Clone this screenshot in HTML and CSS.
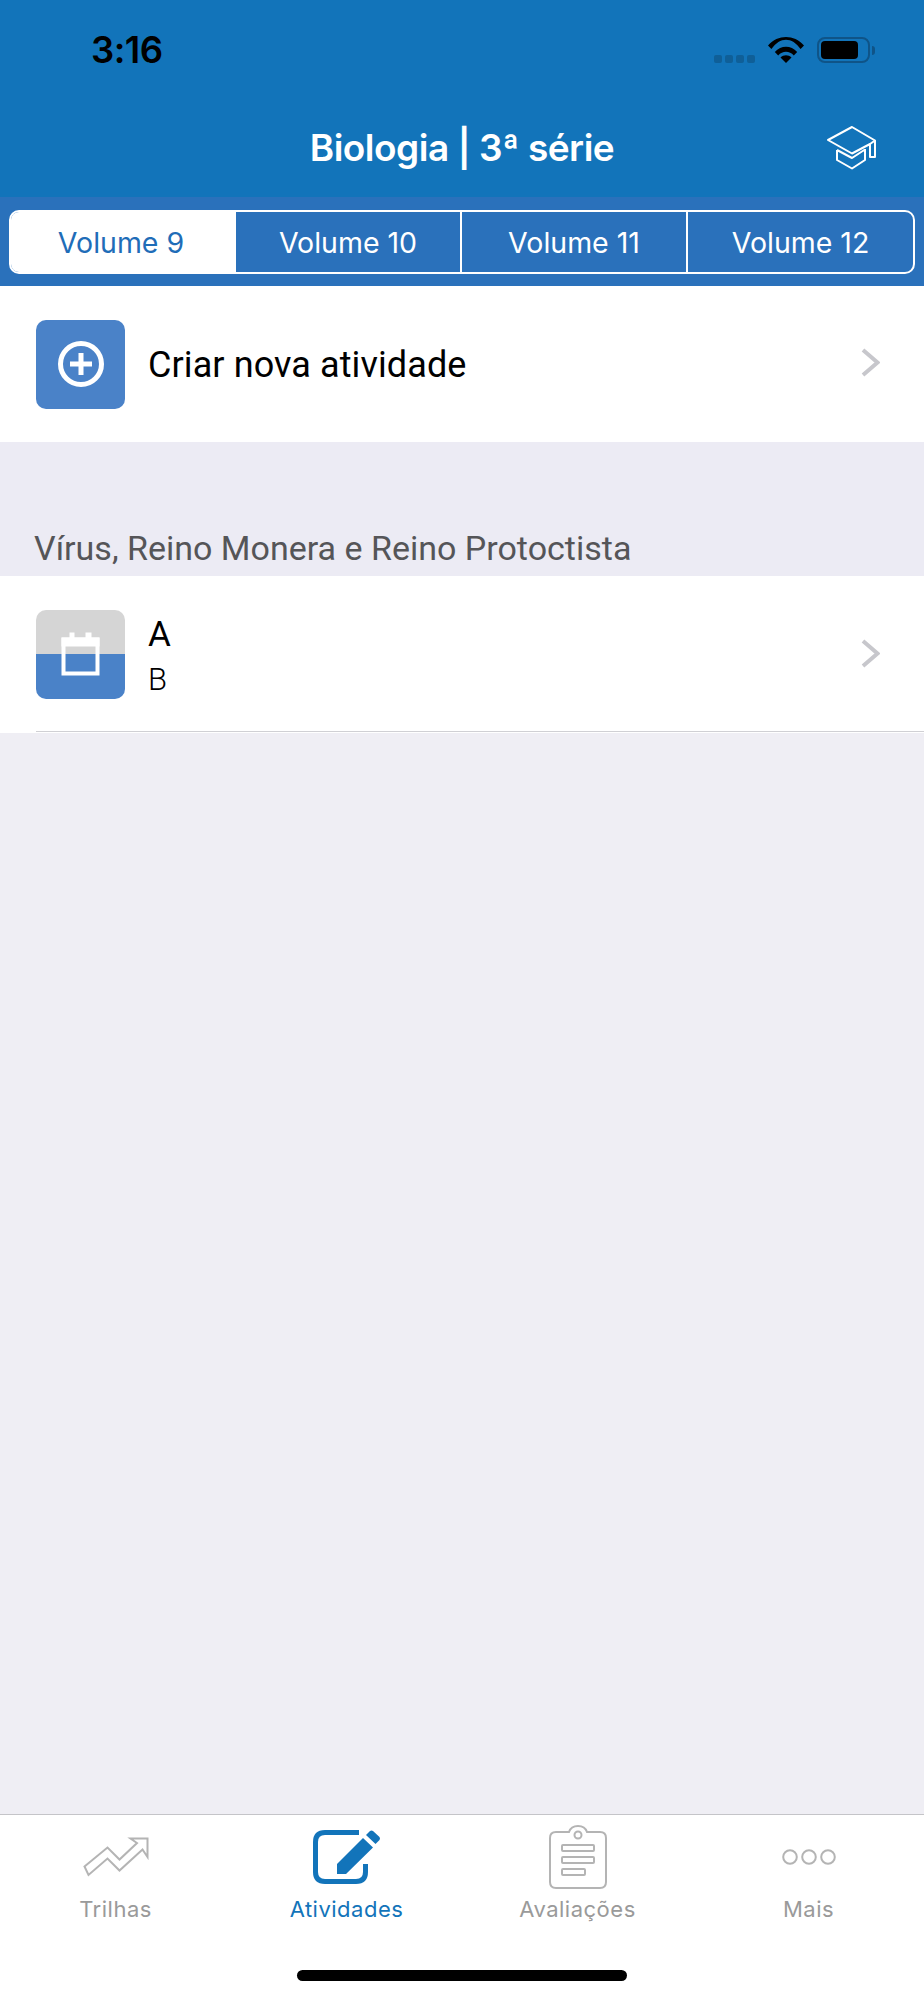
FILE: index.html
```html
<!DOCTYPE html>
<html lang="pt-BR">

<head>
    <meta charset="UTF-8">
    <meta name="viewport" content="width=device-width, initial-scale=1.0">
    <title>Biologia | 3ª série</title>
    <link rel="stylesheet" href="styles.css">
</head>

<body>
    <header class="top-bar">
        <div class="status-bar">
            <span class="clock">3:16</span>
            <div class="status-icons">
                <div class="signal"><i></i><i></i><i></i><i></i></div>
                <svg class="wifi" width="36" height="26" viewBox="0 0 36 26">
                    <path d="M0 8.5C10-2.8 26-2.8 36 8.500L32.600 12C24-.5 12-.5 3.400 12Z" />
                    <path d="M6.800 15C13 8 23 8 29.200 15L25.800 18.500C21.500 13.500 14.500 13.500 10.200 18.500Z" />
                    <path d="M12.500 20.500C15.500 17.500 20.500 17.500 23.500 20.500L18 26Z" />
                </svg>
                <div class="battery"><div class="battery-level"></div></div>
                <div class="battery-nub"></div>
            </div>
        </div>
        <div class="title-bar">
            <h1>Biologia | 3ª série</h1>
            <svg class="cap-icon" width="50" height="44" viewBox="0 0 50 44">
                <path d="M25 1L48 14.500V31H43V18L25 27.500L1 14Z" />
                <path d="M43 18L48 14.500M10 24V34L25 42.500L38 34V23M10 24L25 32L38 23.500" />
            </svg>
        </div>
        <div class="volume-bar">
            <div class="volume-tabs">
                <div class="volume-tab active">Volume 9</div>
                <div class="volume-tab">Volume 10</div>
                <div class="volume-tab">Volume 11</div>
                <div class="volume-tab">Volume 12</div>
            </div>
        </div>
    </header>

    <main class="content">
        <div class="list-row">
            <div class="row-icon new-icon">
                <svg width="48" height="48" viewBox="0 0 48 48">
                    <circle cx="24" cy="24" r="20.500" />
                    <path d="M24 13V35M13 24H35" />
                </svg>
            </div>
            <div class="row-title">Criar nova atividade</div>
            <svg class="chevron" width="20" height="32" viewBox="0 0 20 32"><path d="M3 3L17.500 15.500L3 28" /></svg>
        </div>

        <h2 class="section-title">Vírus, Reino Monera e Reino Protoctista</h2>

        <div class="list-row activity-row">
            <div class="row-icon date-icon">
                <svg width="40" height="46" viewBox="0 0 40 46">
                    <path class="cal-box" d="M2.500 7.500H36.500V41.500H2.500Z" />
                    <path class="cal-fill" d="M.5 5.500H38.500V14.500H.5ZM8.500 .5H13.500V6H8.500ZM24.500 .5H30.500V6H24.500Z" />
                </svg>
            </div>
            <div class="row-text">
                <div class="row-name">A</div>
                <div class="row-sub">B</div>
            </div>
            <svg class="chevron" width="20" height="32" viewBox="0 0 20 32"><path d="M3 3L17.500 15.500L3 28" /></svg>
        </div>
    </main>

    <nav class="tab-bar">
        <div class="tabs">
            <div class="tab">
                <div class="tab-icon">
                    <svg width="66" height="40" viewBox="0 0 66 40">
                        <path d="M1.500 29.500L24.500 10.500L36.500 22.500L54 6L47.500 1.500H64.500V20L59.500 12.500L36.500 33.500L24.500 21.500L5.500 38Z" />
                    </svg>
                </div>
                <span>Trilhas</span>
            </div>
            <div class="tab active">
                <div class="tab-icon">
                    <svg width="68" height="54" viewBox="0 0 68 54">
                        <path class="edit-box" d="M46 2.500H12Q2.500 2.500 2.500 12V42Q2.500 51.500 12 51.500H43Q52.500 51.500 52.500 42V34" />
                        <path class="edit-pen" d="M53 5L57 1Q58.500 0 60 1L66.500 7Q67.500 8.500 66.500 10L62.500 14ZM50 8L60 17.500L33 44H24V34Z" />
                    </svg>
                </div>
                <span>Atividades</span>
            </div>
            <div class="tab">
                <div class="tab-icon">
                    <svg width="58" height="64" viewBox="0 0 58 64">
                        <path d="M7 7H20Q22 1 29 1Q36 1 38 7H51Q57 7 57 13V57Q57 63 51 63H7Q1 63 1 57V13Q1 7 7 7Z" />
                        <circle cx="29" cy="10" r="3.500" />
                        <rect x="13" y="20" width="32" height="6" rx="1" />
                        <rect x="13" y="32" width="32" height="6" rx="1" />
                        <rect x="13" y="44" width="23" height="6" rx="1" />
                    </svg>
                </div>
                <span>Avaliações</span>
            </div>
            <div class="tab">
                <div class="tab-icon">
                    <svg width="54" height="16" viewBox="0 0 54 16">
                        <circle cx="8" cy="8" r="6.800" />
                        <circle cx="27" cy="8" r="6.800" />
                        <circle cx="46" cy="8" r="6.800" />
                    </svg>
                </div>
                <span>Mais</span>
            </div>
        </div>
        <div class="home-indicator"></div>
    </nav>
</body>

</html>
```

FILE: styles.css
```css
html,
body {
    height: 100%;
}

body {
    margin: 0;
    font-family: Roboto, "Liberation Sans", sans-serif;
    background-color: #EFEEF4;
    display: flex;
    flex-direction: column;
    min-height: 2000px;
}

svg {
    display: block;
}

/* top */
.top-bar {
    background-color: #1274BA;
    color: white;
}

.status-bar {
    height: 100px;
    padding: 37px 49px 0 91px;
    box-sizing: border-box;
    display: flex;
    justify-content: space-between;
    align-items: flex-start;
}

.clock {
    font-family: Inter, sans-serif;
    font-size: 36.500px;
    font-weight: 600;
    line-height: 26px;
    color: black;
    letter-spacing: -0.5px;
}

.status-icons {
    display: flex;
    align-items: flex-start;
}

.signal {
    display: flex;
    gap: 3px;
    margin-top: 18px;
    margin-right: 13px;
}

.signal i {
    width: 8px;
    height: 8px;
    border-radius: 2px;
    background-color: #0F5F98;
}

.wifi {
    fill: black;
    margin-right: 13px;
}

.battery {
    width: 53px;
    height: 26px;
    box-sizing: border-box;
    border: 2px solid #0F5488;
    border-radius: 8px;
    padding: 2px;
}

.battery-level {
    width: 37px;
    height: 18px;
    background-color: black;
    border-radius: 4px;
}

.battery-nub {
    width: 3px;
    height: 9px;
    margin: 9px 0 0 2px;
    background-color: #0F5488;
    border-radius: 0 3px 3px 0;
}

.title-bar {
    height: 97px;
    display: flex;
    justify-content: center;
    align-items: flex-start;
    position: relative;
}

.title-bar h1 {
    margin: 25px 0 0;
    font-family: Inter, sans-serif;
    font-size: 37px;
    line-height: 46px;
    font-weight: 600;
    letter-spacing: -0.5px;
}

.cap-icon {
    position: absolute;
    left: 827px;
    top: 26px;
    fill: none;
    stroke: white;
    stroke-width: 2;
    stroke-linejoin: round;
}

.volume-bar {
    height: 89px;
    background-color: #2A71BB;
    padding: 13px 9px 0;
    box-sizing: border-box;
}

.volume-tabs {
    display: flex;
    height: 64px;
    box-sizing: border-box;
    border: 2px solid white;
    border-radius: 10px;
    overflow: hidden;
}

.volume-tab {
    width: 226px;
    display: flex;
    align-items: center;
    justify-content: center;
    font-family: Inter, sans-serif;
    font-size: 28.500px;
    border-left: 2px solid white;
    box-sizing: border-box;
}

.volume-tab.active {
    width: 223px;
    padding-right: 3px;
    background-color: white;
    color: #1F6DB8;
    border-left: none;
}

.volume-tab:last-child {
    flex: 1;
}

/* list */
.content {
    flex: 1;
}

.list-row {
    height: 156px;
    background-color: white;
    display: flex;
    align-items: center;
    padding: 0 44px 0 36px;
}

.row-icon {
    width: 89px;
    height: 89px;
    border-radius: 10px;
    display: flex;
    align-items: center;
    justify-content: center;
    margin-right: 23px;
    flex-shrink: 0;
}

.new-icon {
    background-color: #4A82C8;
}

.new-icon svg {
    fill: none;
    stroke: white;
    stroke-width: 5;
}

.date-icon {
    background: linear-gradient(#D5D5D5 50%, #4A82C8 50%);
}

.cal-box {
    fill: none;
    stroke: white;
    stroke-width: 4;
}

.cal-fill {
    fill: white;
}

.row-title {
    flex: 1;
    padding-top: 2px;
    font-size: 36px;
    letter-spacing: 0.1px;
    color: black;
}

.row-text {
    flex: 1;
    padding-top: 7px;
}

.row-name {
    font-size: 35px;
    line-height: 40px;
    color: black;
}

.row-sub {
    font-size: 31px;
    font-weight: 300;
    line-height: 44px;
    padding-top: 3px;
    color: black;
}

.chevron {
    fill: none;
    stroke: #C7C7CC;
    stroke-width: 4;
    margin-top: -2px;
}

.section-title {
    margin: 0;
    height: 134px;
    box-sizing: border-box;
    padding: 86px 0 0 34px;
    font-size: 34px;
    line-height: 40px;
    font-weight: 400;
    color: #555558;
    background-color: #ECEBF4;
}

.activity-row {
    height: 157px;
    position: relative;
}

.activity-row::after {
    content: "";
    position: absolute;
    left: 36px;
    right: 0;
    bottom: 1px;
    height: 1px;
    background-color: #D0D0D4;
}

/* tabs */
.tab-bar {
    height: 186px;
    box-sizing: border-box;
    border-top: 1px solid #C4C4C8;
    background-color: white;
    padding-top: 10px;
}

.tabs {
    display: grid;
    grid-template-columns: repeat(4, 1fr);
}

.tab {
    display: flex;
    flex-direction: column;
    align-items: center;
    font-family: Inter, sans-serif;
    font-size: 22px;
    font-weight: 400;
    line-height: 26px;
    letter-spacing: 0.5px;
    color: #9A9A9A;
}

.tab.active {
    color: #1274BA;
}

.tab-icon {
    height: 64px;
    margin-bottom: 7px;
    display: flex;
    align-items: center;
    justify-content: center;
}

.tab-icon svg {
    fill: none;
    stroke: #B4B4B4;
    stroke-width: 2;
}

.tab.active .tab-icon svg {
    stroke: none;
}

.edit-box {
    fill: none;
    stroke: #1274BA;
    stroke-width: 5;
}

.edit-pen {
    fill: #1274BA;
}

.home-indicator {
    width: 330px;
    height: 11px;
    margin: 48px auto 0;
    border-radius: 6px;
    background-color: black;
}
```
